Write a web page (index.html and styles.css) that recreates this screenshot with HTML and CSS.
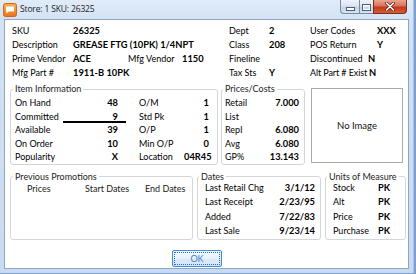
FILE: index.html
```html
<!DOCTYPE html>
<html>
<head>
<meta charset="utf-8">
<title>Store: 1 SKU: 26325</title>
<link rel="stylesheet" href="styles.css">
</head>
<body>
<div class="window">
  <div class="titlebar">
    <svg class="app-icon" width="14" height="14" viewBox="0 0 14 14">
      <defs>
        <linearGradient id="ig" x1="0" y1="0" x2="0" y2="1">
          <stop offset="0" stop-color="#fbb54a"/>
          <stop offset="1" stop-color="#e9701c"/>
        </linearGradient>
      </defs>
      <rect x="0.5" y="0.5" width="13" height="13" rx="2" fill="url(#ig)" stroke="#d2651a"/>
      <path d="M3 3.5h8v5H6l-2.5 2V8.5H3z" fill="#fff"/>
    </svg>
    <span class="title">Store: 1 SKU: 26325</span>
    <div class="caption-btns">
      <span class="cbtn cmin"><svg width="9" height="4" viewBox="0 0 9 4"><rect x="0.5" y="0.5" width="8" height="3" fill="#fff" stroke="#4b5d78"/></svg></span>
      <span class="cbtn cmax"><svg width="9" height="7" viewBox="0 0 9 7"><rect x="0.5" y="0.5" width="8" height="6" fill="#fff" stroke="#4b5d78"/><rect x="2" y="2.5" width="5" height="2.5" fill="#c9d6e6"/></svg></span>
      <span class="cbtn cclose"><svg width="10" height="9" viewBox="0 0 10 9"><path d="M1.5 1l7 7M8.5 1l-7 7" stroke="#5a1a10" stroke-width="3" stroke-linecap="round"/><path d="M1.5 1l7 7M8.5 1l-7 7" stroke="#fff" stroke-width="1.6" stroke-linecap="round"/></svg></span>
    </div>
  </div>

  <div class="client">
    <div class="header-grid">
      <span>SKU</span><span class="b span3">26325</span><span>Dept</span><span class="b">2</span><span>User Codes</span><span class="b nudge">XXX</span>
      <span>Description</span><span class="b span3">GREASE FTG (10PK) 1/4NPT</span><span>Class</span><span class="b">208</span><span>POS Return</span><span class="b nudge">Y</span>
      <span>Prime Vendor</span><span class="b">ACE</span><span>Mfg Vendor</span><span class="b">1150</span><span>Fineline</span><span></span><span>Discontinued</span><span class="b">N</span>
      <span>Mfg Part #</span><span class="b span3">1911-B 10PK</span><span>Tax Sts</span><span class="b">Y</span><span class="tight">Alt Part # Exist</span><span class="b nudge1">N</span>
    </div>

    <div class="mid">
      <fieldset class="grp item">
        <legend>Item Information</legend>
        <div class="item-grid">
          <span>On Hand</span><span class="b r">48</span><span></span><span>O/M</span><span class="b r">1</span>
          <span>Committed</span><span class="b r committed">9</span><span></span><span>Std Pk</span><span class="b r">1</span>
          <span>Available</span><span class="b r">39</span><span></span><span>O/P</span><span class="b r">1</span>
          <span>On Order</span><span class="b r">10</span><span></span><span>Min O/P</span><span class="b r">0</span>
          <span>Popularity</span><span class="b r">X</span><span></span><span>Location</span><span class="b r">04R45</span>
        </div>
      </fieldset>
      <fieldset class="grp prices">
        <legend>Prices/Costs</legend>
        <div class="price-grid">
          <span>Retail</span><span class="b r">7.000</span>
          <span>List</span><span class="b r"></span>
          <span>Repl</span><span class="b r">6.080</span>
          <span>Avg</span><span class="b r">6.080</span>
          <span>GP%</span><span class="b r">13.143</span>
        </div>
      </fieldset>
      <div class="noimage">No Image</div>
    </div>

    <div class="bottom">
      <fieldset class="grp promos">
        <legend>Previous Promotions</legend>
        <div class="promo-head">
          <span>Prices</span><span>Start Dates</span><span>End Dates</span>
        </div>
      </fieldset>
      <fieldset class="grp dates">
        <legend>Dates</legend>
        <div class="date-grid">
          <span>Last Retail Chg</span><span class="b r">3/1/12</span>
          <span>Last Receipt</span><span class="b r">2/23/95</span>
          <span>Added</span><span class="b r">7/22/83</span>
          <span>Last Sale</span><span class="b r">9/23/14</span>
        </div>
      </fieldset>
      <fieldset class="grp units">
        <legend>Units of Measure</legend>
        <div class="unit-grid">
          <span>Stock</span><span class="b">PK</span>
          <span>Alt</span><span class="b">PK</span>
          <span>Price</span><span class="b">PK</span>
          <span>Purchase</span><span class="b">PK</span>
        </div>
      </fieldset>
    </div>

    <div class="actions">
      <button class="ok" type="button">OK</button>
    </div>
  </div>
</div>
</body>
</html>
```

FILE: styles.css
```css
* { box-sizing: border-box; }
html, body { margin: 0; padding: 0; }
body {
  width: 416px;
  height: 274px;
  overflow: hidden;
  background: #fff;
  font-family: Lato, "Liberation Sans", sans-serif;
  font-size: 9px;
  color: #000;
}

.window {
  width: 416px;
  height: 274px;
  display: flex;
  flex-direction: column;
  background: linear-gradient(180deg, #e2ecf8 0px, #d3e2f4 19px, #c9dbf1 100%);
  border-right: 2px solid #7d9fcf;
  border-bottom: 1px solid #7d9fcf;
  box-shadow: inset -1px 0 0 #a9c4e8;
}

/* title bar */
.titlebar {
  height: 19px;
  flex: none;
  display: flex;
  align-items: flex-start;
}
.app-icon { margin: 3px 0 0 3px; flex: none; }
.title {
  margin: 3px 0 0 3px;
  font-family: "Open Sans", "Noto Sans", sans-serif;
  font-size: 8.5px;
  line-height: 12px;
  letter-spacing: -0.15px;
  color: #1c1c1c;
}
.caption-btns {
  margin-left: auto;
  margin-right: 7px;
  display: flex;
  height: 14px;
}
.cbtn {
  display: flex;
  align-items: center;
  justify-content: center;
  height: 14px;
  border: 1px solid #7b8aa3;
  border-top: none;
}
.cmin {
  width: 19px;
  border-radius: 0 0 0 4px;
  border-right: none;
  background: linear-gradient(180deg, #eef3fa 0, #dbe5f2 45%, #c6d4e7 55%, #d8e3f1 100%);
}
.cmax {
  width: 14px;
  border-right: none;
  background: linear-gradient(180deg, #eef3fa 0, #dbe5f2 45%, #c6d4e7 55%, #d8e3f1 100%);
}
.cmax svg { margin-top: 1px; }
.cmin svg { margin-top: 4px; }
.cclose {
  width: 34px;
  border-radius: 0 0 4px 0;
  border-color: #7a2b1c;
  background: linear-gradient(180deg, #eaa590 0, #d8735b 45%, #c2391b 55%, #d65b36 100%);
}

/* client area */
.client {
  margin-left: 4px;
  width: 405px;
  height: 250px;
  flex: none;
  background: #fff;
  border: 1px solid #8fa5c1;
  padding: 4px 0 0 5px;
}

.b { font-weight: 700; font-size: 9.3px; }
.r { text-align: right; }

.header-grid {
  padding-left: 2px;
  display: grid;
  grid-template-columns: 61px 55px 54px 47px 40px 41px 58px auto;
  grid-auto-rows: 14px;
  line-height: 14px;
  white-space: nowrap;
}
.span3 { grid-column: span 3; }
.nudge { padding-left: 9px; }
.nudge1 { padding-left: 1px; }
.tight { letter-spacing: -0.1px; }

/* group boxes */
.grp {
  margin: 0;
  border: 1px solid #d3d6da;
  border-radius: 3px;
  min-width: 0;
}
.grp legend {
  padding: 0 2px;
  margin-left: -2px;
  line-height: 12px;
  color: #1e1e1e;
}

.mid {
  margin-top: 3px;
  display: flex;
  align-items: flex-start;
}
.item {
  width: 208px;
  padding: 0 8px 0 4px;
}
.item-grid {
  margin-top: 1px;
  display: grid;
  grid-template-columns: 70px 33px 21px 45px 25px;
  grid-auto-rows: 13.6px;
  line-height: 13.6px;
  white-space: nowrap;
}
.committed { position: relative; }
.committed::after {
  content: "";
  position: absolute;
  left: -22px;
  top: 11px;
  width: 63px;
  height: 2px;
  background: #000;
}
.prices {
  margin-left: 3px;
  width: 84px;
  padding: 0 5px 0 3px;
}
.price-grid {
  margin-top: 1px;
  display: grid;
  grid-template-columns: 1fr auto;
  grid-auto-rows: 13.6px;
  line-height: 13.6px;
}
.noimage {
  margin: 5px 0 0 6px;
  width: 92px;
  height: 75px;
  border: 1px solid #a9a9a9;
  display: flex;
  align-items: center;
  justify-content: center;
  color: #111;
  font-size: 9.5px;
}

.bottom {
  margin-top: 6px;
  display: flex;
  gap: 4px;
  align-items: stretch;
}
.promos {
  width: 183px;
  padding: 0 4px 0 4px;
}
.promo-head {
  padding-left: 12px;
  display: grid;
  grid-template-columns: 58px 60px auto;
  line-height: 12px;
  color: #1a1a1a;
}
.dates {
  width: 124px;
  padding: 0 5px 0 7px;
}
.dates legend, .units legend { margin-left: -6px; }
.date-grid {
  margin-top: -2px;
  display: grid;
  grid-template-columns: 1fr auto;
  grid-auto-rows: 14.5px;
  line-height: 14.5px;
  white-space: nowrap;
}
.units {
  width: 81px;
  padding: 0 3px 0 7px;
}
.unit-grid {
  margin-top: -2px;
  display: grid;
  grid-template-columns: 45px auto;
  grid-auto-rows: 14.5px;
  line-height: 14.5px;
  white-space: nowrap;
}

.actions {
  margin-top: 10px;
  padding-left: 162px;
}
.ok {
  width: 50px;
  height: 17px;
  padding: 0;
  font-family: Lato, "Liberation Sans", sans-serif;
  font-size: 9px;
  color: #3b7fd0;
  background: linear-gradient(180deg, #f4f9fe 0, #e8f2fc 50%, #dcebfa 51%, #d2e5f8 100%);
  border: 1px solid #3c8ee0;
  border-radius: 2px;
  outline: 1px dotted #2b6cc4;
  outline-offset: -3px;
}
```
